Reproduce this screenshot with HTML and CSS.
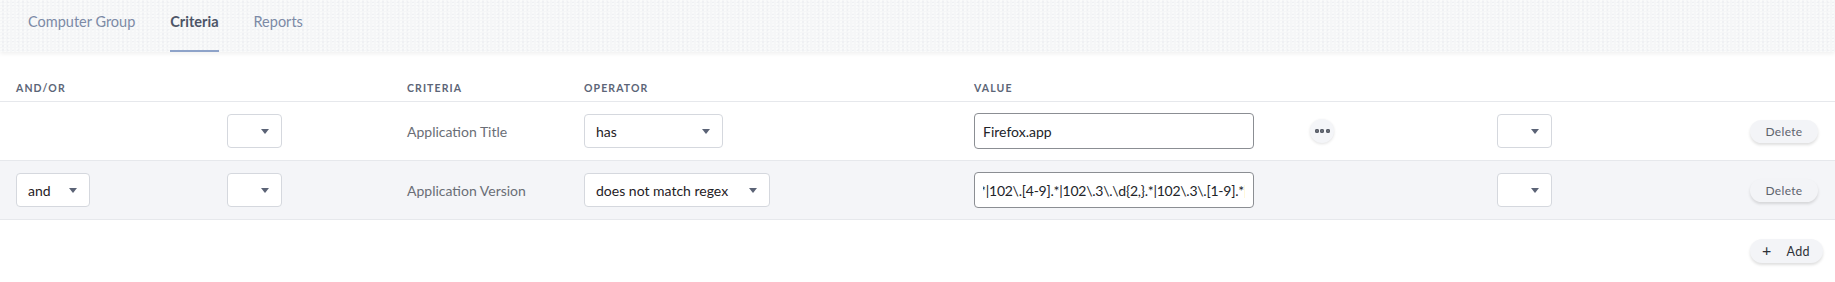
FILE: index.html
```html
<!DOCTYPE html>
<html>
<head>
<meta charset="utf-8">
<link rel="stylesheet" href="styles.css">
</head>
<body>
<div class="tabs">
  <div class="tab">Computer Group</div>
  <div class="tab active">Criteria</div>
  <div class="tab">Reports</div>
</div>
<div class="table">
  <div class="row head">
    <div class="th">AND/OR</div>
    <div class="th"></div>
    <div class="th">CRITERIA</div>
    <div class="th">OPERATOR</div>
    <div class="th">VALUE</div>
    <div class="th"></div>
    <div class="th"></div>
  </div>
  <div class="row">
    <div class="cell"></div>
    <div class="cell"><div class="select small"><span></span><i class="caret"></i></div></div>
    <div class="cell label">Application Title</div>
    <div class="cell"><div class="select op1"><span>has</span><i class="caret"></i></div></div>
    <div class="cell"><div class="input"><div class="clip"><span>Firefox.app</span></div></div></div>
    <div class="cell"><div class="dots"><i></i><i></i><i></i></div></div>
    <div class="cell last"><div class="select small"><span></span><i class="caret"></i></div><div class="pill">Delete</div></div>
  </div>
  <div class="row alt">
    <div class="cell"><div class="select andor"><span>and</span><i class="caret"></i></div></div>
    <div class="cell"><div class="select small"><span></span><i class="caret"></i></div></div>
    <div class="cell label">Application Version</div>
    <div class="cell"><div class="select op2"><span>does not match regex</span><i class="caret"></i></div></div>
    <div class="cell"><div class="input"><div class="clip"><span class="scrolled">.*|102\.[4-9].*|102\.3\.\d{2,}.*|102\.3\.[1-9].*|102\.4.*</span></div></div></div>
    <div class="cell"></div>
    <div class="cell last"><div class="select small"><span></span><i class="caret"></i></div><div class="pill">Delete</div></div>
  </div>
  <div class="footer">
    <div class="pill add"><span class="plus">+</span><span>Add</span></div>
  </div>
</div>
</body>
</html>
```

FILE: styles.css
```css
* { box-sizing: border-box; }
html, body { margin: 0; padding: 0; background: #fff; }
body {
  font-family: Lato, "Open Sans", "Liberation Sans", sans-serif;
  color: #2a2d33;
  width: 1835px;
  height: 282px;
  overflow: hidden;
}
.tabs {
  height: 52px;
  display: flex;
  align-items: stretch;
  padding-left: 28px;
  gap: 35px;
  background-color: #f5f6f7;
  background-image:
    radial-gradient(circle at 1px 1px, rgba(255,255,255,0.55) 0.7px, transparent 1.1px),
    radial-gradient(circle at 3px 2px, rgba(232,233,237,0.45) 0.7px, transparent 1.1px);
  background-size: 4px 3px, 5px 4px;
  box-shadow: 0 2px 4px rgba(0,0,0,0.06);
  position: relative;
}
.tab {
  font-size: 14.5px;
  color: #7c8aa6;
  display: flex;
  align-items: center;
  padding-bottom: 7px;
  border-bottom: 2px solid transparent;
}
.tab.active {
  color: #4d5567;
  font-weight: 700;
  border-bottom-color: #8ea3c9;
}
.row {
  display: grid;
  grid-template-columns: 211px 180px 177px 390px 335px 188px 1fr;
  padding: 0 17px 0 16px;
  height: 59px;
  align-items: center;
  border-bottom: 1px solid #e6e8ec;
}
.row.head {
  height: 50px;
  align-items: end;
  padding-bottom: 7px;
}
.th {
  font-size: 10.5px;
  font-weight: 700;
  letter-spacing: 1.1px;
  color: #5c6577;
}
.row.alt { background: #f4f5f8; }
.cell { display: flex; align-items: center; }
.label { font-size: 14px; color: #6a6e76; }
.select {
  height: 34px;
  border: 1px solid #d5d8de;
  border-radius: 4px;
  background: #fff;
  display: flex;
  align-items: center;
  justify-content: space-between;
  padding: 0 12px 0 11px;
  font-size: 14px;
  color: #1f2125;
}
.select.small { width: 55px; }
.select.op1 { width: 139px; }
.select.op2 { width: 186px; }
.select.andor { width: 74px; }
.caret {
  width: 0; height: 0;
  border-left: 4.5px solid transparent;
  border-right: 4.5px solid transparent;
  border-top: 5px solid #5b6376;
  display: block;
}
.input {
  width: 280px;
  height: 36px;
  border: 1px solid #8b8e93;
  border-radius: 4px;
  background: #fff;
  display: flex;
  align-items: center;
  padding: 0 8px;
  font-size: 14px;
  color: #222429;
}
.clip {
  flex: 1;
  overflow: hidden;
  white-space: nowrap;
}
.scrolled { display: inline-block; margin-left: -6px; letter-spacing: -0.25px; }
.dots {
  width: 24px; height: 24px;
  border-radius: 50%;
  background: #f4f5f8;
  box-shadow: 0 1px 3px rgba(0,0,0,0.12);
  display: flex;
  align-items: center;
  justify-content: center;
  gap: 1.5px;
  margin-left: 1px;
}
.dots i {
  width: 4px; height: 4px;
  border-radius: 50%;
  background: #6c717c;
  box-shadow: inset 0 0 0 1px #555a64;
  display: block;
}
.last { justify-content: space-between; }
.pill {
  height: 23px;
  width: 68px;
  border-radius: 12px;
  background: #f3f4f7;
  box-shadow: 0 2px 3px rgba(0,0,0,0.13);
  display: flex;
  align-items: center;
  justify-content: center;
  font-size: 12px;
  color: #5e636d;
  letter-spacing: 0.3px;
}
.footer {
  display: flex;
  justify-content: flex-end;
  padding: 19px 12px 0 0;
}
.pill.add {
  width: 73px;
  height: 24px;
  color: #2e3138;
  font-size: 12.5px;
  gap: 15px;
  justify-content: flex-start;
  padding-left: 12px;
}
.plus { font-size: 16px; line-height: 1; margin-top: -2px; }
```
